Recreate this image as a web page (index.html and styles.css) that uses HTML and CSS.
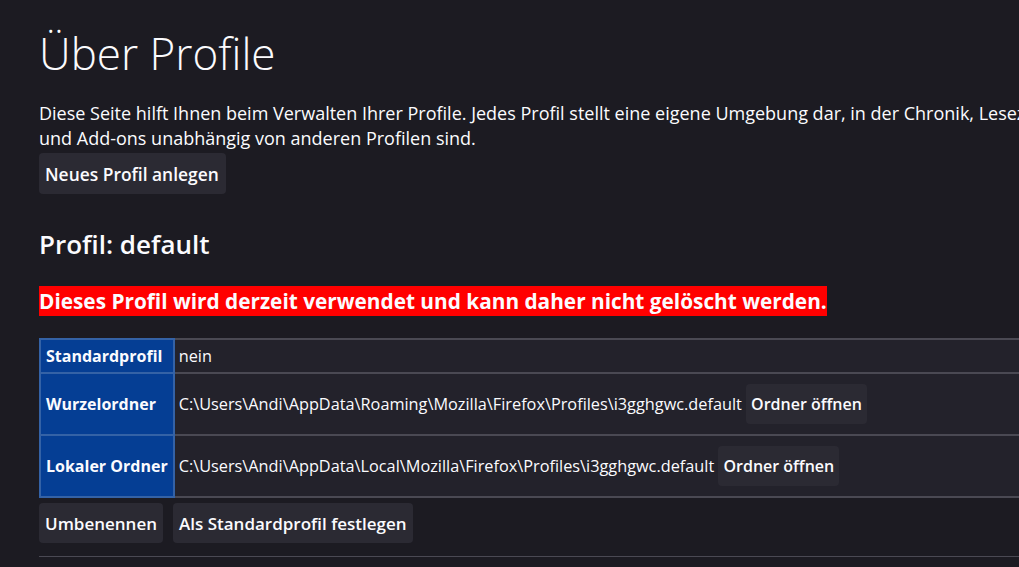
FILE: index.html
```html
<!DOCTYPE html>
<html lang="de">
<head>
  <meta charset="UTF-8" />
  <title>Über Profile</title>
  <link rel="stylesheet" href="styles.css">
</head>
<body>
  <div class="page">
    <h1 class="title">Über Profile</h1>
    <p class="intro">Diese Seite hilft Ihnen beim Verwalten Ihrer Profile. Jedes Profil stellt eine eigene Umgebung dar, in der Chronik, Lesezeichen, Einstellungen<br>und Add-ons unabhängig von anderen Profilen sind.</p>
    <button class="btn">Neues Profil anlegen</button>

    <div class="profile">
      <h2 class="profile-name">Profil: default</h2>
      <h3 class="in-use"><span>Dieses Profil wird derzeit verwendet und kann daher nicht gelöscht werden.</span></h3>
      <table class="info">
        <tr class="row-short">
          <th>Standardprofil</th>
          <td>nein</td>
        </tr>
        <tr>
          <th>Wurzelordner</th>
          <td>C:\Users\Andi\AppData\Roaming\Mozilla\Firefox\Profiles\i3gghgwc.default <button class="btn">Ordner öffnen</button></td>
        </tr>
        <tr>
          <th>Lokaler Ordner</th>
          <td>C:\Users\Andi\AppData\Local\Mozilla\Firefox\Profiles\i3gghgwc.default <button class="btn">Ordner öffnen</button></td>
        </tr>
      </table>
      <div class="actions">
        <button class="btn">Umbenennen</button>
        <button class="btn">Als Standardprofil festlegen</button>
      </div>
      <hr class="sep">
    </div>
  </div>
</body>
</html>
```

FILE: styles.css
```css
* {
  box-sizing: border-box;
}
html, body {
  margin: 0;
  padding: 0;
  overflow: hidden;
}
body {
  background: #1c1b22;
  color: #fbfbfe;
  font-family: "Open Sans", "Noto Sans", sans-serif;
  font-size: 17px;
}
.page {
  padding: 20px 0 0 39px;
  width: 1019px;
  overflow: hidden;
}
.title {
  margin: 0;
  font-size: 44px;
  font-weight: 300;
  line-height: 66px;
}
.intro {
  margin: 15px 0 2px;
  font-size: 18px;
  line-height: 25px;
  width: 1300px;
  white-space: nowrap;
}
.btn {
  font-family: inherit;
  font-size: 17px;
  font-weight: 600;
  color: #fbfbfe;
  background: #2b2a33;
  border: none;
  border-radius: 4px;
  height: 40px;
  padding: 0 6px;
  margin: 0;
}
.page > .btn {
  height: 41px;
  padding: 0 7px 0 6px;
  font-size: 17.4px;
}
.profile-name {
  margin: 30px 0 0;
  font-size: 26px;
  font-weight: 600;
  line-height: 40px;
}
.in-use {
  margin: 22px 0 0;
  font-size: 20.8px;
  font-weight: 700;
  line-height: 30px;
}
.in-use span {
  background: #ff0000;
  display: inline-block;
}
.info {
  margin-top: 22px;
  border-collapse: collapse;
  border: 2px solid #4a4953;
  width: 1100px;
}
.info th {
  background: #053e94;
  border: 2px solid #3462a6;
  text-align: left;
  font-size: 16px;
  font-weight: 700;
  padding: 0 5px;
  height: 62px;
  width: 1px;
  white-space: nowrap;
}
.info td {
  background: #23222b;
  border: 2px solid #4a4953;
  font-size: 16.3px;
  padding: 0 4px;
  white-space: nowrap;
}
.info td .btn {
  font-size: 16px;
  padding: 0 5px;
}
.info .row-short th,
.info .row-short td {
  height: 34px;
}
.actions {
  display: flex;
  gap: 10px;
  margin-top: 5px;
}
.sep {
  margin: 13px 0 0;
  border: none;
  border-top: 1px solid #4a4953;
}
```
